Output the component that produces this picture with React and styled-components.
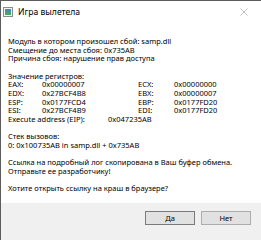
import React from "react";
import styled, { createGlobalStyle } from "styled-components";

const Global = createGlobalStyle`
  html, body { margin: 0; padding: 0; background: #ffffff; }
  body { font-family: "Noto Sans", "Open Sans", sans-serif; }
`;

const Window = styled.div`
  width: 261px;
  height: 240px;
  box-sizing: border-box;
  border-left: 1px solid #5c5c5c;
  border-top: 1px solid #5c5c5c;
  background: #ffffff;
  display: flex;
  flex-direction: column;
  overflow: hidden;
`;

const TitleBar = styled.div`
  height: 21px;
  display: flex;
  align-items: center;
  padding: 0 0 0 2px;
  gap: 5px;
  flex-shrink: 0;
`;

const TitleText = styled.div`
  font-size: 8.6px;
  color: #000;
  flex: 1;
`;

const CloseBox = styled.div`
  width: 22px;
  display: flex;
  align-items: center;
  justify-content: center;
  margin-right: 6px;
`;

const Content = styled.div`
  flex: 1;
  padding: 15px 8px 0 7px;
  font-size: 7.5px;
  line-height: 8.65px;
  color: #000;
`;

const Line = styled.div`
  white-space: nowrap;
  min-height: 8.65px;
`;

const RegGrid = styled.div`
  display: grid;
  grid-template-columns: 34px 96px 36px auto;
  white-space: nowrap;
`;

const EipRow = styled.div`
  display: grid;
  grid-template-columns: 100px auto;
  white-space: nowrap;
`;

const Footer = styled.div`
  height: 29px;
  background: #f0f0f0;
  display: flex;
  justify-content: flex-end;
  align-items: flex-start;
  padding: 8px 10px 0 0;
  gap: 6px;
  flex-shrink: 0;
`;

const Button = styled.div`
  width: 50px;
  height: 14px;
  box-sizing: border-box;
  background: #e1e1e1;
  border: 1px solid ${(p) => (p.$default ? "#7a7a7a" : "#adadad")};
  display: flex;
  align-items: center;
  justify-content: center;
  font-size: 7.5px;
  color: #000;
`;

const registers = [
  ["EAX:", "0x00000007", "ECX:", "0x00000000"],
  ["EDX:", "0x27BCF4B8", "EBX:", "0x00000007"],
  ["ESP:", "0x0177FCD4", "EBP:", "0x0177FD20"],
  ["ESI:", "0x27BCF4B9", "EDI:", "0x0177FD20"],
];

function AppIcon() {
  return (
    <svg width="10" height="10" viewBox="0 0 10 10">
      <rect x="0.5" y="0.5" width="9" height="9" fill="#f4f4f4" stroke="#8a8a8a" />
      <rect x="2" y="2" width="6" height="6" fill="#3f8fb5" />
      <rect x="2" y="5" width="6" height="3" fill="#4aa36a" />
    </svg>
  );
}

function CloseIcon() {
  return (
    <svg width="8" height="8" viewBox="0 0 8 8">
      <path d="M0.5 0.5 L7.5 7.5 M7.5 0.5 L0.5 7.5" stroke="#b0b0b0" strokeWidth="0.8" />
    </svg>
  );
}

export default function App() {
  return (
    <>
      <Global />
      <Window>
        <TitleBar>
          <AppIcon />
          <TitleText>Игра вылетела</TitleText>
          <CloseBox>
            <CloseIcon />
          </CloseBox>
        </TitleBar>
        <Content>
          <Line>Модуль в котором произошел сбой: samp.dll</Line>
          <Line>Смещение до места сбоя: 0x735AB</Line>
          <Line>Причина сбоя: нарушение прав доступа</Line>
          <Line />
          <Line>Значение регистров:</Line>
          <RegGrid>
            {registers.map((r) =>
              r.map((c, i) => <span key={r[0] + i}>{c}</span>)
            )}
          </RegGrid>
          <EipRow>
            <span>Execute address (EIP):</span>
            <span>0x047235AB</span>
          </EipRow>
          <Line />
          <Line>Стек вызовов:</Line>
          <Line>0: 0x100735AB in samp.dll + 0x735AB</Line>
          <Line />
          <Line>Ссылка на подробный лог скопирована в Ваш буфер обмена.</Line>
          <Line>Отправьте ее разработчику!</Line>
          <Line />
          <Line>Хотите открыть ссылку на краш в браузере?</Line>
        </Content>
        <Footer>
          <Button $default>Да</Button>
          <Button>Нет</Button>
        </Footer>
      </Window>
    </>
  );
}
